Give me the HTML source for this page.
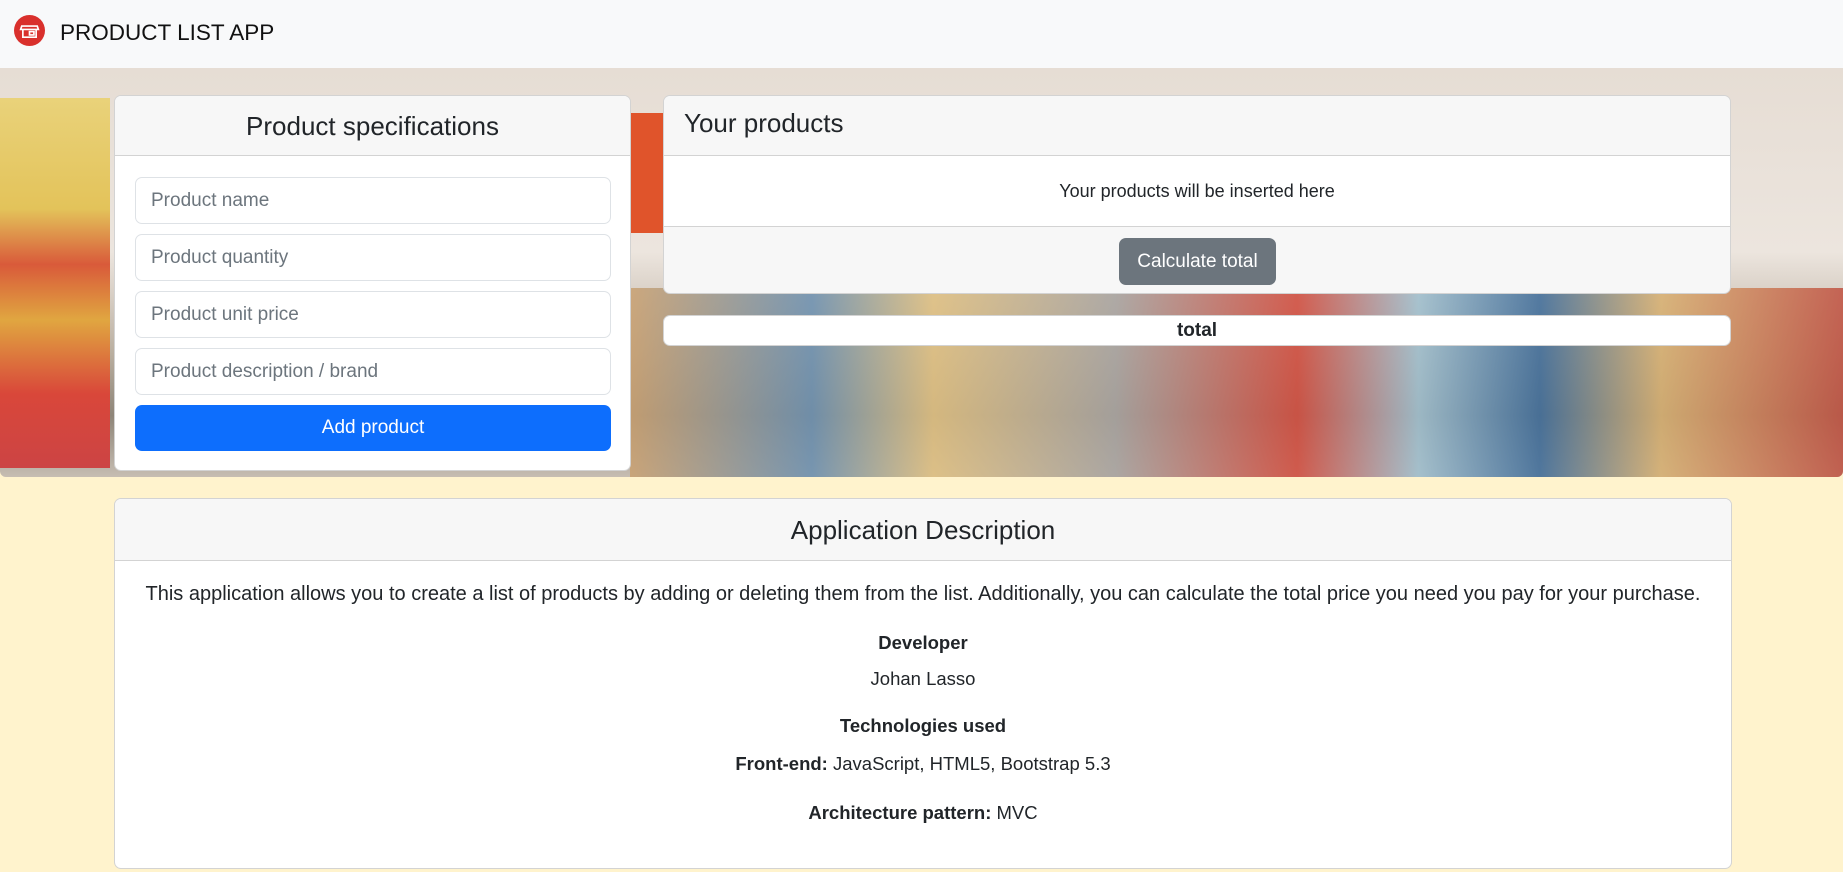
<!DOCTYPE html>
<html><head><meta charset="utf-8"><style>
*{box-sizing:border-box;margin:0;padding:0}
body{width:1843px;height:872px;overflow:hidden;background:#fff3cd;font-family:"Liberation Sans",sans-serif;color:#212529;position:relative}
.nav{position:absolute;left:0;top:0;width:1843px;height:68px;background:#f8f9fa}
.logo{position:absolute;left:14px;top:15px;width:31px;height:31px;border-radius:50%;background:#d9302c}
.brand{position:absolute;left:60px;top:20px;font-size:22.5px;color:#111}
.banner{position:absolute;left:0;top:68px;width:1843px;height:409px;border-radius:0 0 6px 6px;overflow:hidden;
background:linear-gradient(180deg,#e6ddd4 0%,#ece5de 45%,#d9d0c6 55%,#b9ae9f 70%,#8e8578 85%,#c6bdb2 100%)}
.shelf{position:absolute}
.card{position:absolute;background:#fff;border:1px solid #d3d3d3;border-radius:7px;overflow:hidden}
.hd{background:#f7f7f7;border-bottom:1px solid #d3d3d3}
.inp{position:absolute;left:20px;width:476px;height:47px;border:1px solid #dee2e6;border-radius:7px;font-size:19px;color:#6c757d;padding:12px 15px;line-height:22px}
.c{text-align:center}
</style></head><body>
<div class="nav"><div class="logo"><svg width="31" height="31" viewBox="0 0 28 28"><g fill="none" stroke="#fff" stroke-width="1.5"><path d="M7 10h14l1 3H6z"/><path d="M8 13v7h12v-7"/><rect x="14" y="15" width="4" height="3"/></g></svg></div><div class="brand">PRODUCT LIST APP</div></div>
<div class="banner">
<div class="shelf" style="left:0;top:30px;width:110px;height:370px;background:linear-gradient(180deg,#e9d27a 0,#e3c35a 30%,#d95a3a 45%,#e0a640 60%,#d9473a 80%,#c44 100%)"></div>
<div class="shelf" style="left:630px;top:45px;width:40px;height:120px;background:#e0542b"></div>
<div class="shelf" style="left:630px;top:220px;width:1213px;height:189px;background:linear-gradient(90deg,#c9a070,#6a8fb0 15%,#e0c080 25%,#a7a3a0 40%,#d24a3c 55%,#9fc0d0 65%,#3c6b9a 75%,#d8b070 85%,#c05040 100%);opacity:.85"></div>
</div>
<div class="card" style="left:114px;top:95px;width:517px;height:376px">
<div class="hd c" style="height:60px;font-size:26px;line-height:60px;font-weight:500">Product specifications</div>
<div class="inp" style="top:81px">Product name</div>
<div class="inp" style="top:138px">Product quantity</div>
<div class="inp" style="top:195px">Product unit price</div>
<div class="inp" style="top:252px">Product description / brand</div>
<div class="c" style="position:absolute;left:20px;top:309px;width:476px;height:46px;background:#0d6efd;border-radius:7px;color:#fff;font-size:19px;line-height:46px">Add product</div>
</div>
<div class="card" style="left:663px;top:95px;width:1068px;height:199px;background:#f7f7f7">
<div class="hd" style="height:60px;font-size:26px;line-height:54px;padding-left:20px;font-weight:500">Your products</div>
<div class="c" style="height:71px;background:#fff;border-bottom:1px solid #d3d3d3;font-size:18px;line-height:70px">Your products will be inserted here</div>
<div class="c" style="position:absolute;left:455px;top:142px;width:157px;height:47px;background:#6c757d;border-radius:7px;color:#fff;font-size:19px;line-height:47px">Calculate total</div>
</div>
<div class="card c" style="left:663px;top:315px;width:1068px;height:31px;font-weight:bold;font-size:19px;line-height:29px">total</div>
<div class="card" style="left:114px;top:498px;width:1618px;height:371px">
<div class="hd c" style="height:62px;font-size:26px;line-height:62px;font-weight:500">Application Description</div>
<div class="c" style="font-size:18.5px">
<div style="position:absolute;top:84px;width:100%;font-size:20px">This application allows you to create a list of products by adding or deleting them from the list. Additionally, you can calculate the total price you need you pay for your purchase.</div>
<div style="position:absolute;top:133px;width:100%;font-weight:bold">Developer</div>
<div style="position:absolute;top:169px;width:100%">Johan Lasso</div>
<div style="position:absolute;top:216px;width:100%;font-weight:bold">Technologies used</div>
<div style="position:absolute;top:254px;width:100%"><b>Front-end:</b> JavaScript, HTML5, Bootstrap 5.3</div>
<div style="position:absolute;top:303px;width:100%"><b>Architecture pattern:</b> MVC</div>
</div></div>
</body></html>
